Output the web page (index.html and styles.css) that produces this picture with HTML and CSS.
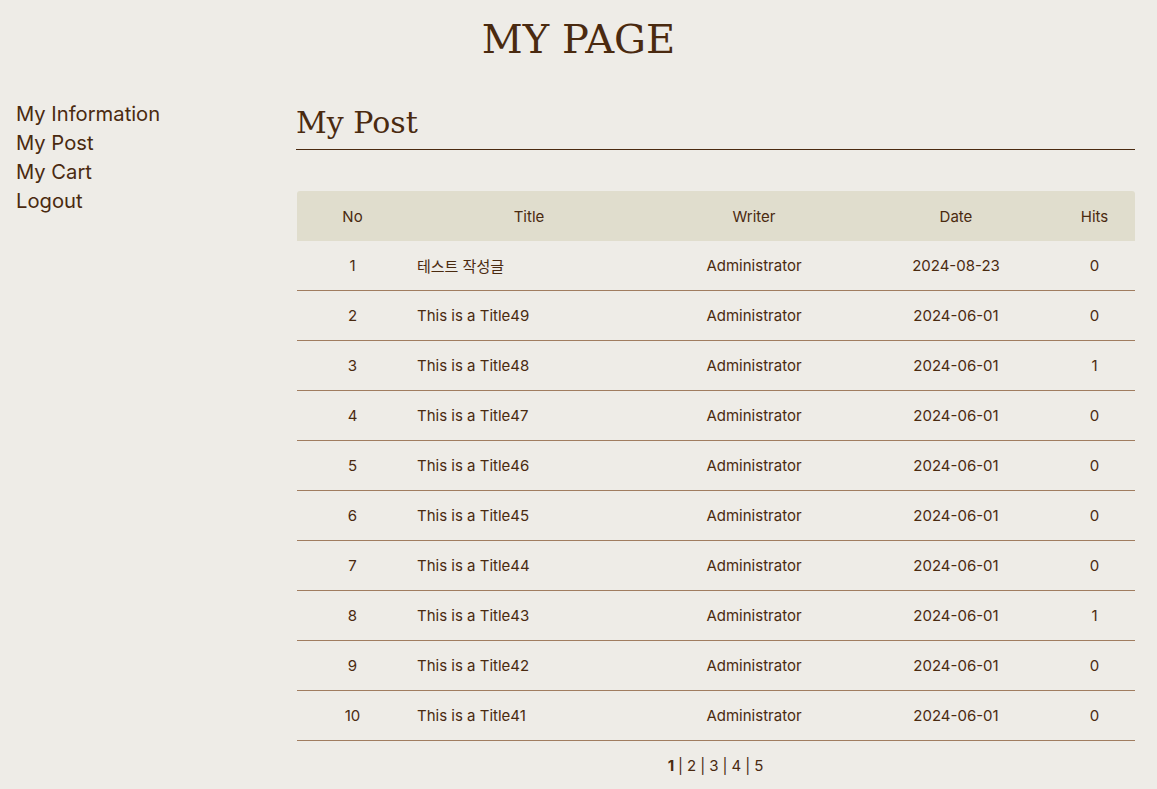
FILE: index.html
```html
<!DOCTYPE html>
<html lang="ko">
<head>
<meta charset="utf-8">
<title>My Page</title>
<link rel="stylesheet" href="styles.css">
</head>
<body>
<header class="page-header">
  <h1 class="page-title">MY PAGE</h1>
</header>
<div class="layout">
  <nav class="sidebar">
    <a href="#">My Information</a>
    <a href="#">My Post</a>
    <a href="#">My Cart</a>
    <a href="#">Logout</a>
  </nav>
  <main class="content">
    <h2 class="section-title">My Post</h2>
    <table class="post-table">
      <colgroup>
        <col class="c-no"><col class="c-title"><col class="c-writer"><col class="c-date"><col class="c-hits">
      </colgroup>
      <thead>
        <tr><th>No</th><th>Title</th><th>Writer</th><th>Date</th><th>Hits</th></tr>
      </thead>
      <tbody>
        <tr><td>1</td><td class="t">테스트 작성글</td><td>Administrator</td><td>2024-08-23</td><td>0</td></tr>
        <tr><td>2</td><td class="t">This is a Title49</td><td>Administrator</td><td>2024-06-01</td><td>0</td></tr>
        <tr><td>3</td><td class="t">This is a Title48</td><td>Administrator</td><td>2024-06-01</td><td>1</td></tr>
        <tr><td>4</td><td class="t">This is a Title47</td><td>Administrator</td><td>2024-06-01</td><td>0</td></tr>
        <tr><td>5</td><td class="t">This is a Title46</td><td>Administrator</td><td>2024-06-01</td><td>0</td></tr>
        <tr><td>6</td><td class="t">This is a Title45</td><td>Administrator</td><td>2024-06-01</td><td>0</td></tr>
        <tr><td>7</td><td class="t">This is a Title44</td><td>Administrator</td><td>2024-06-01</td><td>0</td></tr>
        <tr><td>8</td><td class="t">This is a Title43</td><td>Administrator</td><td>2024-06-01</td><td>1</td></tr>
        <tr><td>9</td><td class="t">This is a Title42</td><td>Administrator</td><td>2024-06-01</td><td>0</td></tr>
        <tr><td>10</td><td class="t">This is a Title41</td><td>Administrator</td><td>2024-06-01</td><td>0</td></tr>
      </tbody>
    </table>
    <div class="pagination">
      <a href="#" class="current">1</a><span class="sep">|</span><a href="#">2</a><span class="sep">|</span><a href="#">3</a><span class="sep">|</span><a href="#">4</a><span class="sep">|</span><a href="#">5</a>
    </div>
  </main>
</div>
</body>
</html>
```

FILE: styles.css
```css
html, body {
  margin: 0;
  padding: 0;
  background: #eeece7;
  color: #4a2a10;
  font-family: Inter, "Noto Sans CJK KR", sans-serif;
}

a {
  color: inherit;
  text-decoration: none;
}

.page-header {
  padding-top: 14px;
  text-align: center;
}

.page-title {
  margin: 0;
  font-family: "DejaVu Serif", "Liberation Serif", serif;
  font-weight: normal;
  font-size: 40px;
  line-height: 50px;
  color: #4a2a10;
}

.layout {
  display: flex;
  padding: 0 22px 0 16px;
  margin-top: 36px;
}

.sidebar {
  width: 280px;
  flex: none;
  display: flex;
  flex-direction: column;
  font-size: 20.2px;
  line-height: 29px;
  margin-top: -1px;
}

.content {
  flex: 1;
  min-width: 0;
  padding-top: 2px;
}

.section-title {
  margin: 0;
  font-family: "DejaVu Serif", "Liberation Serif", serif;
  font-weight: normal;
  font-size: 30px;
  line-height: 42px;
  padding-bottom: 5px;
  border-bottom: 1px solid #4a2a10;
}

.post-table {
  width: calc(100% - 1px);
  margin: 41px 0 0 1px;
  border-collapse: collapse;
  font-size: 15px;
  color: #4a2a10;
}

.c-no { width: 111px; }
.c-title { width: 242px; }
.c-writer { width: 208px; }
.c-date { width: 196px; }
.c-hits { width: 81px; }

.post-table thead th {
  background: #e0ddcd;
  font-weight: normal;
  height: 50px;
  padding: 0;
  text-align: center;
}

.post-table thead th:first-child { border-top-left-radius: 3px; }
.post-table thead th:last-child { border-top-right-radius: 3px; }

.post-table tbody td {
  height: 49px;
  padding: 0;
  text-align: center;
  border-bottom: 1px solid #a07d60;
}

.post-table tbody td.t {
  text-align: left;
  padding-left: 9px;
}

.pagination {
  text-align: center;
  margin-top: 14px;
  font-size: 15px;
  line-height: 22px;
}

.pagination a.current {
  font-weight: bold;
}

.pagination .sep {
  margin: 0 4px;
}
```
